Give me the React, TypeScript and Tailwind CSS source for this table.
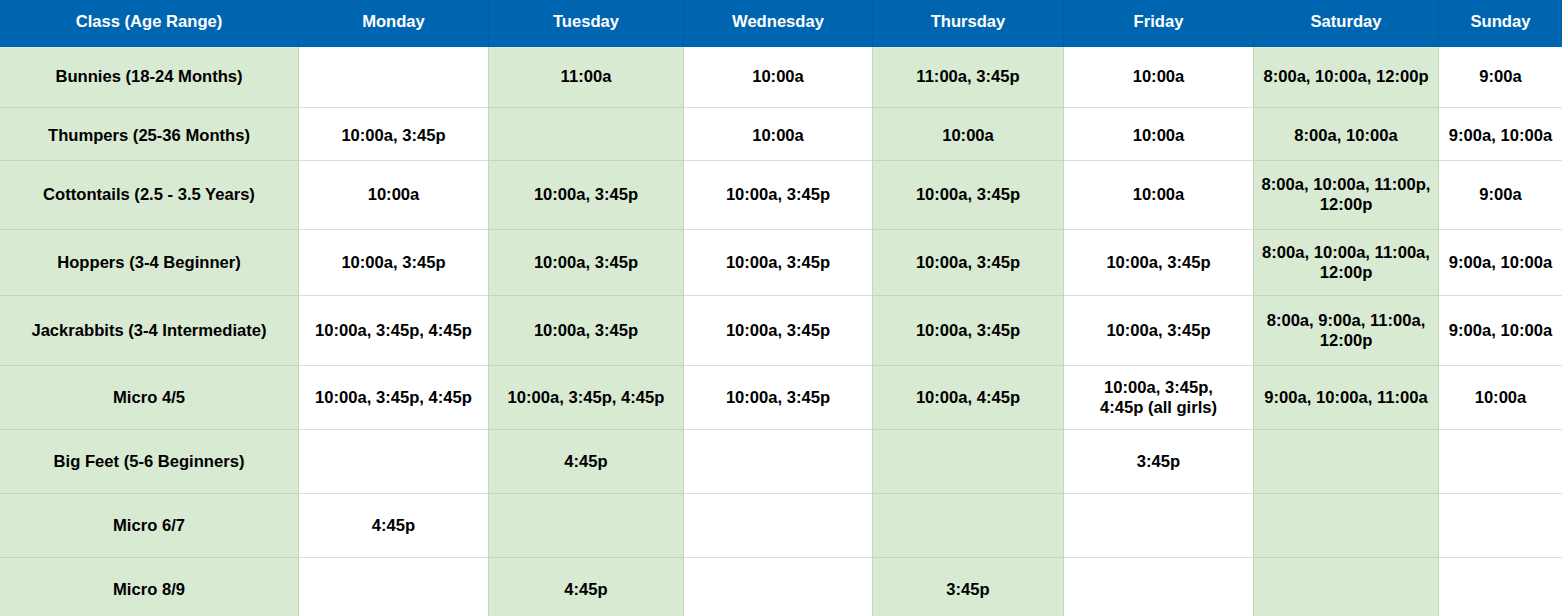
const days = ["Monday", "Tuesday", "Wednesday", "Thursday", "Friday", "Saturday", "Sunday"];

type Row = {
  name: string;
  height: string;
  pad?: string;
  times: string[][];
};

// each time entry is a list of lines
const rows: Row[] = [
  {
    name: "Bunnies (18-24 Months)",
    height: "h-[61px]",
    times: [[], ["11:00a"], ["10:00a"], ["11:00a, 3:45p"], ["10:00a"], ["8:00a, 10:00a, 12:00p"], ["9:00a"]],
  },
  {
    name: "Thumpers (25-36 Months)",
    height: "h-[53px]",
    pad: "pt-[4px]",
    times: [["10:00a, 3:45p"], [], ["10:00a"], ["10:00a"], ["10:00a"], ["8:00a, 10:00a"], ["9:00a, 10:00a"]],
  },
  {
    name: "Cottontails (2.5 - 3.5 Years)",
    height: "h-[69px]",
    times: [
      ["10:00a"],
      ["10:00a, 3:45p"],
      ["10:00a, 3:45p"],
      ["10:00a, 3:45p"],
      ["10:00a"],
      ["8:00a, 10:00a, 11:00p,", "12:00p"],
      ["9:00a"],
    ],
  },
  {
    name: "Hoppers (3-4 Beginner)",
    height: "h-[66px]",
    times: [
      ["10:00a, 3:45p"],
      ["10:00a, 3:45p"],
      ["10:00a, 3:45p"],
      ["10:00a, 3:45p"],
      ["10:00a, 3:45p"],
      ["8:00a, 10:00a, 11:00a,", "12:00p"],
      ["9:00a, 10:00a"],
    ],
  },
  {
    name: "Jackrabbits (3-4 Intermediate)",
    height: "h-[70px]",
    times: [
      ["10:00a, 3:45p, 4:45p"],
      ["10:00a, 3:45p"],
      ["10:00a, 3:45p"],
      ["10:00a, 3:45p"],
      ["10:00a, 3:45p"],
      ["8:00a, 9:00a, 11:00a,", "12:00p"],
      ["9:00a, 10:00a"],
    ],
  },
  {
    name: "Micro 4/5",
    height: "h-[64px]",
    times: [
      ["10:00a, 3:45p, 4:45p"],
      ["10:00a, 3:45p, 4:45p"],
      ["10:00a, 3:45p"],
      ["10:00a, 4:45p"],
      ["10:00a, 3:45p,", "4:45p (all girls)"],
      ["9:00a, 10:00a, 11:00a"],
      ["10:00a"],
    ],
  },
  {
    name: "Big Feet (5-6 Beginners)",
    height: "h-[64px]",
    times: [[], ["4:45p"], [], [], ["3:45p"], [], []],
  },
  {
    name: "Micro 6/7",
    height: "h-[64px]",
    times: [["4:45p"], [], [], [], [], [], []],
  },
  {
    name: "Micro 8/9",
    height: "h-[64px]",
    times: [[], ["4:45p"], [], ["3:45p"], [], [], []],
  },
];

function Cell({ lines, green, last, pad }: { lines: string[]; green: boolean; last?: boolean; pad?: string }) {
  const base = "flex flex-col items-center justify-center border-b px-1 text-center";
  const right = last ? "" : "border-r border-r-[#c3d6bc]";
  const fill = green ? "border-b-[#c3d6bc] bg-[#d9ead3]" : "border-b-[#dddddd] bg-white";
  return (
    <div className={`${base} ${right} ${fill} ${pad ?? ""}`}>
      {lines.map((line) => (
        <span key={line} className="whitespace-nowrap leading-[20px]">
          {line}
        </span>
      ))}
    </div>
  );
}

export default function App() {
  return (
    <div className="w-[1562px] overflow-hidden bg-white font-['Liberation_Sans',Arial,sans-serif] text-[16.6px] font-bold text-black">
      <div className="grid grid-cols-[299px_190px_195px_189px_191px_190px_185px_123px]">
        <div className="flex h-[47px] items-center justify-center border-r border-[#0b5a98] bg-[#0065b0] pb-[2px] text-white">
          Class (Age Range)
        </div>
        {days.map((day, i) => (
          <div
            key={day}
            className={
              i === days.length - 1
                ? "flex h-[47px] items-center justify-center bg-[#0065b0] pb-[2px] text-white"
                : "flex h-[47px] items-center justify-center border-r border-[#0b5a98] bg-[#0065b0] pb-[2px] text-white"
            }
          >
            {day}
          </div>
        ))}
      </div>

      {rows.map((row) => (
        <div key={row.name} className={`grid grid-cols-[299px_190px_195px_189px_191px_190px_185px_123px] ${row.height}`}>
          <Cell lines={[row.name]} green pad={row.pad} />
          {row.times.map((lines, i) => (
            <Cell
              key={days[i]}
              lines={lines}
              green={i % 2 === 1}
              last={i === row.times.length - 1}
              pad={row.pad}
            />
          ))}
        </div>
      ))}
    </div>
  );
}
